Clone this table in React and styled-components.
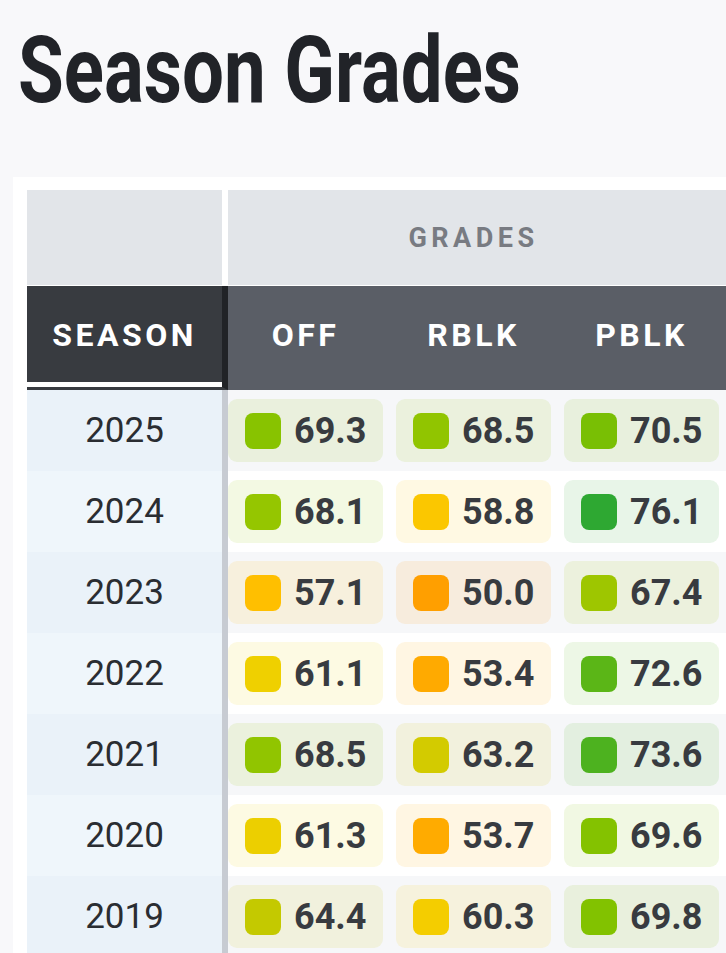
import React from "react";
import styled, { createGlobalStyle } from "styled-components";

const GlobalStyle = createGlobalStyle`
  body {
    margin: 0;
    background: #f8f8fa;
    font-family: Roboto, "Liberation Sans", sans-serif;
    overflow: hidden;
  }
`;

const Page = styled.div`
  padding-left: 13px;
  overflow: hidden;
`;

const Title = styled.h1`
  margin: 25px 0 60px 5px;
  height: 92px;
  font-size: 93px;
  line-height: 92px;
  font-weight: 700;
  color: #212328;
  white-space: nowrap;
  span {
    display: inline-block;
    transform: scaleX(0.8);
    transform-origin: left center;
  }
`;

const Card = styled.div`
  background: #fff;
  padding: 13px 0 0 14px;
  overflow: hidden;
`;

const Row = styled.div`
  display: grid;
  grid-template-columns: 201px repeat(3, 168px);
  margin-bottom: ${(p) => (p.$gap ? "1px" : "0")};
`;

const GroupCell = styled.div`
  grid-column: ${(p) => (p.$span ? `span ${p.$span}` : "auto")};
  height: 95px;
  background: #e2e5e9;
  border-right: ${(p) => (p.$edge ? "6px solid #fff" : "none")};
  display: flex;
  align-items: center;
  justify-content: center;
  padding-right: ${(p) => (p.$span ? "13px" : "0")};
  font-size: 27px;
  font-weight: 700;
  letter-spacing: 4.5px;
  color: #787b82;
`;

const SeasonHead = styled.div`
  height: 104px;
  box-sizing: border-box;
  border-right: 6px solid #212327;
  border-bottom: 3px solid #383b40;
  background: linear-gradient(#383b40, #383b40) top / 100% 96px no-repeat, #fff;
  display: flex;
  align-items: flex-start;
  justify-content: center;
  padding-top: 30px;
  font-size: 32px;
  font-weight: 700;
  letter-spacing: 3.5px;
  color: #fff;
`;

const ColHead = styled.div`
  height: 104px;
  background: #5a5e66;
  display: flex;
  align-items: flex-start;
  justify-content: center;
  padding: 30px 13px 0 0;
  box-sizing: border-box;
  font-size: 32px;
  font-weight: 700;
  letter-spacing: 3.5px;
  color: #fff;
`;

const YearCell = styled.div`
  height: 81px;
  background: ${(p) => (p.$odd ? "#eaf2f9" : "#eff6fb")};
  border-right: 6px solid #c7cbd2;
  display: flex;
  align-items: center;
  justify-content: center;
  font-size: 35px;
  color: #2a2d32;
`;

const GradeCell = styled.div`
  height: 81px;
  box-sizing: border-box;
  padding: 9px 13px 9px 0;
  background: ${(p) => (p.$odd ? "#f6f7f9" : "#fff")};
`;

const Pill = styled.div`
  height: 63px;
  border-radius: 9px;
  display: flex;
  align-items: center;
  gap: 13px;
  padding-left: 17px;
  background: ${(p) => `color-mix(in srgb, ${p.$color} 11%, transparent)`};
`;

const Swatch = styled.span`
  width: 36px;
  height: 36px;
  border-radius: 8px;
  background: ${(p) => p.$color};
`;

const Value = styled.span`
  font-size: 36px;
  font-weight: 700;
  color: #383b40;
`;

const stops = [
  [50, "#ff9f00"],
  [54, "#ffac00"],
  [58, "#ffc400"],
  [61, "#f0d000"],
  [64, "#c9c900"],
  [68, "#96c600"],
  [70, "#80c100"],
  [73, "#55b41a"],
  [76, "#2ea832"],
];

const hex = (h) => [1, 3, 5].map((i) => parseInt(h.slice(i, i + 2), 16));

const gradeColor = (g) => {
  const i = stops.findIndex((s) => s[0] >= g);
  if (i === -1) return stops[stops.length - 1][1];
  if (i === 0) return stops[0][1];
  const [a, ca] = stops[i - 1];
  const [b, cb] = stops[i];
  const t = (g - a) / (b - a);
  const A = hex(ca);
  const B = hex(cb);
  const rgb = A.map((v, k) => Math.round(v + (B[k] - v) * t));
  return `rgb(${rgb.join(",")})`;
};

const seasons = [
  [2025, 69.3, 68.5, 70.5],
  [2024, 68.1, 58.8, 76.1],
  [2023, 57.1, 50.0, 67.4],
  [2022, 61.1, 53.4, 72.6],
  [2021, 68.5, 63.2, 73.6],
  [2020, 61.3, 53.7, 69.6],
  [2019, 64.4, 60.3, 69.8],
];

const columns = ["OFF", "RBLK", "PBLK"];

const App = () => {
  return (
    <Page>
      <GlobalStyle />
      <Title>
        <span>Season Grades</span>
      </Title>
      <Card>
        <Row $gap>
          <GroupCell $edge />
          <GroupCell $span={3}>GRADES</GroupCell>
        </Row>
        <Row>
          <SeasonHead>SEASON</SeasonHead>
          {columns.map((c) => (
            <ColHead key={c}>{c}</ColHead>
          ))}
        </Row>
        {seasons.map(([year, ...grades], i) => (
          <Row key={year}>
            <YearCell $odd={i % 2 === 0}>{year}</YearCell>
            {grades.map((g, j) => (
              <GradeCell key={j} $odd={i % 2 === 0}>
                <Pill $color={gradeColor(g)}>
                  <Swatch $color={gradeColor(g)} />
                  <Value>{g.toFixed(1)}</Value>
                </Pill>
              </GradeCell>
            ))}
          </Row>
        ))}
      </Card>
    </Page>
  );
};

export default App;
